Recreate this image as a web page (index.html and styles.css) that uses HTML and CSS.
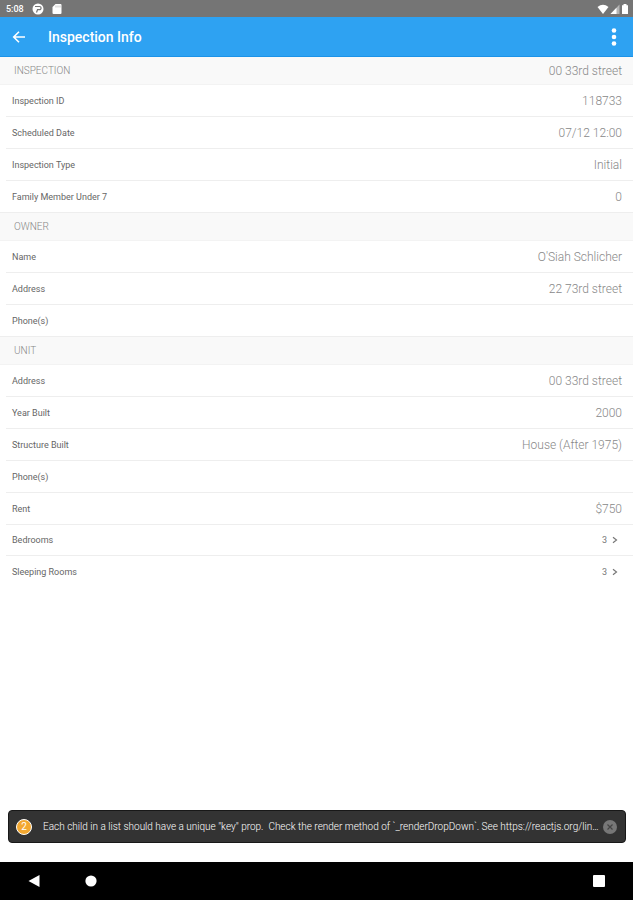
FILE: index.html
```
<!DOCTYPE html>
<html lang="en">
<head>
  <meta charset="UTF-8">
  <meta name="viewport" content="width=device-width, initial-scale=1.0">
  <title>Inspection Info</title>
  <link rel="stylesheet" href="styles.css">
</head>
<body>
<div class="status-bar">
  <span class="clock">5:08</span>
  <svg width="12" height="12" viewBox="0 0 12 12">
    <circle cx="6" cy="6" r="5.5" fill="#fff"/>
    <path d="M3 3.5h4.5a1.6 1.6 0 0 1 0 3.2H5.5L4.5 9.5" fill="none" stroke="#757575" stroke-width="1.2"/>
  </svg>
  <svg width="10" height="12" viewBox="0 0 10 12">
    <path d="M3.5 1H8.500a1 1 0 0 1 1 1V10a1 1 0 0 1-1 1H1.500a1 1 0 0 1-1-1V4z" fill="#fff"/>
    <path d="M4 2.500v2M6 2.500v2M8 2.500v2" stroke="#aaa" stroke-width=".7"/>
  </svg>
  <div class="status-right">
    <svg width="12" height="12" viewBox="0 0 12 12"><path d="M.5 4Q6-.5 11.5 4L6 11z" fill="#fff"/></svg>
    <svg width="10" height="12" viewBox="0 0 10 12">
      <path d="M.5 11L9.500 1.500V11z" fill="#b5b5b5"/>
      <path d="M.5 11L6.500 4.700V11z" fill="#fff"/>
    </svg>
    <svg width="8" height="12" viewBox="0 0 8 12"><path d="M2.500 1h3v1.200H7V11H1V2.200h1.500z" fill="#fff"/></svg>
  </div>
</div>

<header class="app-bar">
  <button type="button" class="icon-button" aria-label="Back">
    <svg width="14" height="14" viewBox="0 0 14 14" fill="none" stroke="#fff" stroke-width="1.6"><path d="M13 7H2M7 1.700L1.700 7L7 12.300"/></svg>
  </button>
  <h1>Inspection Info</h1>
  <button type="button" class="icon-button" aria-label="More options">
    <svg width="6" height="18" viewBox="0 0 6 18" fill="#fff"><circle cx="3" cy="2.500" r="2.300"/><circle cx="3" cy="9" r="2.300"/><circle cx="3" cy="15.500" r="2.300"/></svg>
  </button>
</header>

<main>
  <section>
    <h2>INSPECTION <span class="value">00 33rd street</span></h2>
    <dl>
      <div class="row"><dt>Inspection ID</dt><dd>118733</dd></div>
      <div class="row"><dt>Scheduled Date</dt><dd>07/12 12:00</dd></div>
      <div class="row"><dt>Inspection Type</dt><dd>Initial</dd></div>
      <div class="row row-last"><dt>Family Member Under 7</dt><dd>0</dd></div>
    </dl>
  </section>
  <section>
    <h2>OWNER</h2>
    <dl>
      <div class="row"><dt>Name</dt><dd>O'Siah Schlicher</dd></div>
      <div class="row"><dt>Address</dt><dd>22 73rd street</dd></div>
      <div class="row row-last"><dt>Phone(s)</dt><dd></dd></div>
    </dl>
  </section>
  <section>
    <h2>UNIT</h2>
    <dl>
      <div class="row"><dt>Address</dt><dd>00 33rd street</dd></div>
      <div class="row"><dt>Year Built</dt><dd>2000</dd></div>
      <div class="row"><dt>Structure Built</dt><dd>House (After 1975)</dd></div>
      <div class="row"><dt>Phone(s)</dt><dd></dd></div>
      <div class="row"><dt>Rent</dt><dd>$750</dd></div>
    </dl>
    <button type="button" class="row row-link">
      <span>Bedrooms</span>
      <span class="count">3
        <svg width="6" height="8" viewBox="0 0 6 8" fill="none" stroke="#777" stroke-width="1.2"><path d="M1 1.200L4.500 4L1 6.800"/></svg>
      </span>
    </button>
    <button type="button" class="row row-link">
      <span>Sleeping Rooms</span>
      <span class="count">3
        <svg width="6" height="8" viewBox="0 0 6 8" fill="none" stroke="#777" stroke-width="1.2"><path d="M1 1.200L4.500 4L1 6.800"/></svg>
      </span>
    </button>
  </section>
</main>

<div class="warning" role="alert">
  <span class="warning-count">2</span>
  <p>Each child in a list should have a unique "key" prop.&nbsp; Check the render method of `_renderDropDown`. See https://reactjs.org/lin…</p>
  <button type="button" class="dismiss" aria-label="Dismiss">
    <svg width="14" height="14" viewBox="0 0 14 14"><circle cx="7" cy="7" r="7" fill="#777"/><path d="M4.500 4.500l5 5M9.500 4.500l-5 5" stroke="#444" stroke-width="1.2"/></svg>
  </button>
</div>

<nav class="nav-bar">
  <button type="button" aria-label="Back"><svg width="12" height="12" viewBox="0 0 12 12"><path d="M11.500 0v12L.5 6z" fill="#fff"/></svg></button>
  <button type="button" aria-label="Home"><svg width="12" height="12" viewBox="0 0 12 12"><circle cx="6" cy="6" r="5.600" fill="#fff"/></svg></button>
  <button type="button" aria-label="Recent apps"><svg width="12" height="12" viewBox="0 0 12 12"><rect width="12" height="12" rx="1" fill="#fff"/></svg></button>
</nav>
</body>
</html>
```
FILE: styles.css
```
* {
  box-sizing: border-box;
}

body {
  margin: 0;
  min-height: 100vh;
  display: flex;
  flex-direction: column;
  font-family: Roboto, sans-serif;
  background: #fff;
  color: #666;
}

h1, h2, dl, dd, p {
  margin: 0;
}

button {
  padding: 0;
  border: none;
  background: none;
  font-family: inherit;
  cursor: pointer;
}

svg {
  display: block;
}

.status-bar {
  display: flex;
  align-items: center;
  gap: 8px;
  height: 17px;
  padding: 0 4px 0 6px;
  background: #757575;
  color: #fff;
}

.clock {
  font-size: 9px;
  font-weight: 500;
}

.status-right {
  display: flex;
  gap: 1px;
  margin-left: auto;
}

.app-bar {
  display: flex;
  align-items: center;
  height: 40px;
  padding: 0 16px 0 12px;
  background: #2ea2f2;
  border-bottom: 1px solid #1c93e8;
}

.app-bar h1 {
  flex: 1;
  margin-left: 22px;
  font-size: 14px;
  font-weight: 500;
  color: #fff;
}

h2 {
  display: flex;
  align-items: center;
  justify-content: space-between;
  height: 28px;
  padding: 0 11px 0 14px;
  background: #f9f9f9;
  border-bottom: 1px solid #f3f3f3;
  font-size: 10px;
  font-weight: 300;
  color: #888;
}

.value,
dd {
  font-size: 12px;
  font-weight: 300;
  color: #888;
}

.row {
  display: flex;
  align-items: center;
  justify-content: space-between;
  height: 32px;
  margin-left: 6px;
  padding: 0 11px 0 6px;
  border-bottom: 1px solid #eee;
  font-size: 9px;
}

.row-last {
  margin-left: 0;
  padding-left: 12px;
}

.row-link {
  width: calc(100% - 6px);
  height: 31px;
  padding-right: 15px;
  color: #666;
}

.row-link:last-child {
  border-bottom: none;
}

.count {
  display: flex;
  align-items: center;
  gap: 5px;
  color: #777;
}

.warning {
  display: flex;
  align-items: center;
  height: 33px;
  margin: auto 7px 19px 8px;
  padding: 0 8px 0 7px;
  border: 1px solid #181818;
  border-radius: 4px;
  background: #333;
  color: #fff;
}

.warning-count {
  flex: none;
  width: 16px;
  height: 16px;
  border: 1px solid #fff;
  border-radius: 50%;
  background: #f3a831;
  font-size: 10px;
  line-height: 14px;
  text-align: center;
}

.warning p {
  flex: 1;
  min-width: 0;
  margin: 0 1px 0 11px;
  overflow: hidden;
  font-size: 10px;
  font-weight: 300;
  white-space: nowrap;
  text-overflow: ellipsis;
}

.nav-bar {
  display: flex;
  align-items: center;
  gap: 45px;
  height: 38px;
  padding: 0 28px;
  background: #000;
}

.nav-bar button:last-child {
  margin-left: auto;
}
```
